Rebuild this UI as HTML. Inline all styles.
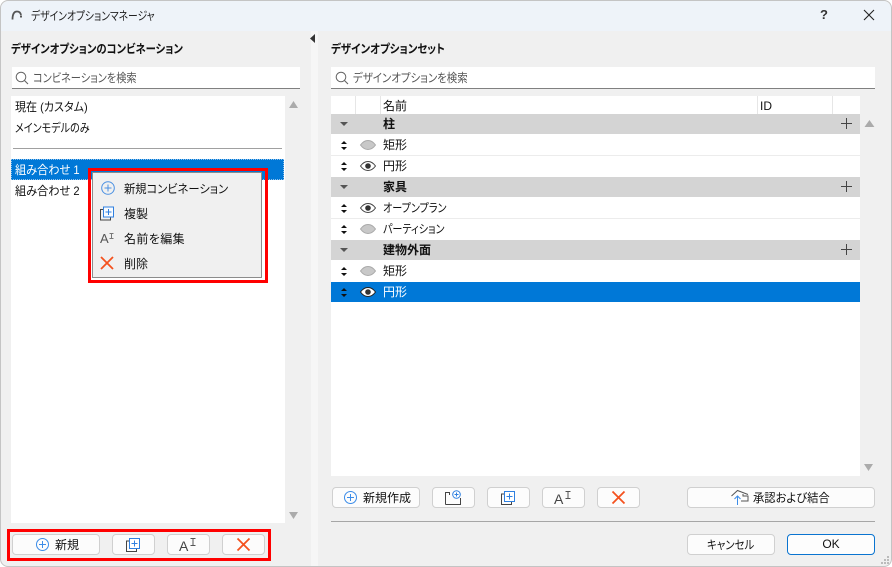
<!DOCTYPE html>
<html lang="ja"><head><meta charset="utf-8"><style>
*{box-sizing:border-box}
html,body{margin:0;padding:0;width:892px;height:567px;overflow:hidden;background:#fff}
body{font-family:"Liberation Sans","Noto Sans CJK JP",sans-serif;font-size:12px;color:#111;position:relative;font-feature-settings:"palt"}
#win{position:absolute;left:0;top:0;width:892px;height:567px;background:#f0f0f0;border:1px solid #c4c4c4;border-radius:8px;overflow:hidden}
.a{position:absolute}
.t{position:absolute;white-space:nowrap;line-height:16px;font-size:12px;transform-origin:0 50%}
.b{font-weight:bold}
.btn{position:absolute;height:21px;background:#fcfcfc;border:1px solid #d0d0d0;border-radius:4px;text-align:center;line-height:19px;font-size:12px}
.row{position:absolute;left:331px;width:529px;height:20px;background:#fff}
.grp{background:#d4d4d4}
svg{position:absolute;overflow:visible}
.red{position:absolute;border:3px solid #f00}
</style></head><body>
<div id="win"></div>

<!-- title bar -->
<div class="a" style="left:1px;top:1px;width:890px;height:30px;background:#eef3f9;border-radius:8px 8px 0 0"></div>
<svg style="left:10px;top:8px" width="14" height="14" viewBox="0 0 14 14"><path d="M2.500 11.500C2.500 6.500 4 3.500 7 3.500c2 0 3.500 1 4 3.500" fill="none" stroke="#555" stroke-width="1.800"/><rect x="10" y="7.500" width="2" height="2" fill="#555"/></svg>
<div class="t" style="left:31px;top:8px;color:#222;transform:scaleX(.816)">デザインオプションマネージャ</div>
<div class="t" style="left:820px;top:7px;font-size:13px;font-weight:bold;color:#333">?</div>
<svg style="left:863px;top:9px" width="12" height="12" viewBox="0 0 12 12"><path d="M1 1L11 11M11 1L1 11" stroke="#222" stroke-width="1.100" fill="none"/></svg>

<!-- splitter -->
<div class="a" style="left:311px;top:31px;width:7px;height:535px;background:#f6f6f6"></div>
<svg style="left:310px;top:34px" width="6" height="9"><path d="M5 0V9L0 4.500Z" fill="#333"/></svg>

<!-- left panel -->
<div class="t b" style="left:11px;top:41px;transform:scaleX(.86)">デザインオプションのコンビネーション</div>
<div class="a" style="left:12px;top:67px;width:288px;height:22px;background:#fff;border-bottom:1px solid #808080"></div>
<svg style="left:15px;top:71px" width="14" height="14" viewBox="0 0 14 14"><circle cx="6" cy="6" r="4.800" fill="none" stroke="#666" stroke-width="1"/><path d="M9.500 9.500L13 13" stroke="#666" stroke-width="1.100"/></svg>
<div class="t" style="left:33px;top:70px;color:#555;transform:scaleX(.85)">コンビネーションを検索</div>

<div class="a" style="left:11px;top:96px;width:274px;height:427px;background:#fff"></div>
<div class="t" style="left:15px;top:99px;transform:scaleX(.92)">現在 (カスタム)</div>
<div class="t" style="left:15px;top:120px;transform:scaleX(.84)">メインモデルのみ</div>
<div class="a" style="left:13px;top:148px;width:269px;height:1px;background:#a0a0a0"></div>
<div class="a" style="left:11px;top:159px;width:273px;height:21px;background:#0078d7;border:1px dotted #8fc0ea"></div>
<div class="t" style="left:15px;top:162px;color:#fff;transform:scaleX(.93)">組み合わせ 1</div>
<div class="t" style="left:15px;top:183px;transform:scaleX(.93)">組み合わせ 2</div>
<svg style="left:289px;top:101px" width="9" height="7"><path d="M4.500 0L9 7H0Z" fill="#ababab"/></svg>
<svg style="left:289px;top:512px" width="9" height="7"><path d="M0 0H9L4.500 7Z" fill="#ababab"/></svg>

<!-- context menu -->
<div class="a" style="left:92px;top:172px;width:170px;height:106px;background:#f0f0f0;border:1px solid #8c8c8c"></div>
<div class="red" style="left:88px;top:168px;width:180px;height:115px"></div>
<svg style="left:101px;top:181px" width="14" height="14" viewBox="0 0 14 14"><circle cx="7" cy="7" r="6.300" fill="none" stroke="#4a90e2"/><path d="M3.500 7H10.500M7 3.500V10.500" stroke="#4a90e2"/></svg>
<div class="t" style="left:124px;top:181px;transform:scaleX(.94)">新規コンビネーション</div>
<svg style="left:100px;top:206px" width="14" height="15" viewBox="0 0 14 15"><path d="M4 3.500H.5V14H10.500V11" fill="none" stroke="#444"/><rect x="3.500" y="1" width="10" height="10" fill="#f8fbff" stroke="#2f80e0"/><path d="M5.500 6H11.500M8.500 3V9" stroke="#2f80e0"/></svg>
<div class="t" style="left:124px;top:206px">複製</div>
<div class="t" style="left:100px;top:231px;font-size:13px;color:#555">A</div>
<svg style="left:109px;top:233px" width="5" height="6"><path d="M.5 .5H4.500M.5 5.500H4.500M2.500 .5V5.500" stroke="#777" fill="none"/></svg>
<div class="t" style="left:124px;top:231px;letter-spacing:.4px">名前を編集</div>
<svg style="left:100px;top:256px" width="14" height="14" viewBox="0 0 14 14"><path d="M1 1L13 13M13 1L1 13" stroke="#f4511e" stroke-width="1.800"/></svg>
<div class="t" style="left:124px;top:256px">削除</div>

<!-- left buttons -->
<div class="red" style="left:7px;top:529px;width:264px;height:32px"></div>
<div class="btn" style="left:12px;top:534px;width:88px"></div>
<svg style="left:36px;top:538px" width="13" height="13" viewBox="0 0 13 13"><circle cx="6.500" cy="6.500" r="6" fill="none" stroke="#3b8ce8"/><path d="M3 6.500H10M6.500 3V10" stroke="#3b8ce8"/></svg>
<div class="t" style="left:55px;top:537px">新規</div>
<div class="btn" style="left:112px;top:534px;width:43px"></div>
<svg style="left:126px;top:538px" width="14" height="14" viewBox="0 0 14 14"><path d="M3.500 3H.5V13.500H10.500V10.500" fill="none" stroke="#444"/><rect x="3.500" y=".5" width="10" height="10" fill="#fff" stroke="#2f80e0"/><path d="M5.500 5.500H11.500M8.500 2.500V8.500" stroke="#2f80e0"/></svg>
<div class="btn" style="left:167px;top:534px;width:43px"></div>
<div class="t" style="left:179px;top:538px;font-size:14px;color:#444">A</div>
<svg style="left:190px;top:538px" width="6" height="8"><path d="M.5 .5H5.500M.5 7.500H5.500M3 .5V7.500" stroke="#555" fill="none"/></svg>
<div class="btn" style="left:222px;top:534px;width:43px"></div>
<svg style="left:237px;top:538px" width="13" height="13" viewBox="0 0 13 13"><path d="M.5 .5L12.500 12.500M12.500 .5L.5 12.500" stroke="#f4511e" stroke-width="1.800"/></svg>

<!-- right panel -->
<div class="t b" style="left:331px;top:41px;transform:scaleX(.87)">デザインオプションセット</div>
<div class="a" style="left:331px;top:67px;width:544px;height:22px;background:#fff;border-bottom:1px solid #808080"></div>
<svg style="left:335px;top:71px" width="14" height="14" viewBox="0 0 14 14"><circle cx="6" cy="6" r="4.800" fill="none" stroke="#666" stroke-width="1"/><path d="M9.500 9.500L13 13" stroke="#666" stroke-width="1.100"/></svg>
<div class="t" style="left:353px;top:70px;color:#555;transform:scaleX(.87)">デザインオプションを検索</div>

<div class="a" style="left:331px;top:96px;width:529px;height:380px;background:#fff"></div>
<!-- header separators -->
<div class="a" style="left:355px;top:96px;width:1px;height:18px;background:#e6e6e6"></div>
<div class="a" style="left:380px;top:96px;width:1px;height:18px;background:#e6e6e6"></div>
<div class="a" style="left:757px;top:96px;width:1px;height:18px;background:#e6e6e6"></div>
<div class="a" style="left:832px;top:96px;width:1px;height:18px;background:#e6e6e6"></div>
<div class="t" style="left:383px;top:98px">名前</div>
<div class="t" style="left:760px;top:98px">ID</div>
<svg style="left:864px;top:120px" width="11" height="7"><path d="M5.500 0L11 7H0Z" fill="#ababab" transform="translate(.5 0) scale(.9 1)"/></svg>
<svg style="left:864px;top:464px" width="10" height="7"><path d="M0 0H9L4.500 7Z" fill="#ababab"/></svg>

<!-- rows -->
<div class="row grp" style="top:114px"></div>
<div class="a" style="left:331px;top:155px;width:529px;height:1px;background:#ececec"></div>
<div class="row grp" style="top:177px"></div>
<div class="a" style="left:331px;top:218px;width:529px;height:1px;background:#ececec"></div>
<div class="row grp" style="top:240px"></div>
<div class="row" style="top:282px;height:20px;background:#0078d7"></div>

<div class="t b" style="left:383px;top:116px">柱</div>
<div class="t b" style="left:383px;top:179px">家具</div>
<div class="t b" style="left:383px;top:242px">建物外面</div>
<div class="t" style="left:383px;top:137px">矩形</div>
<div class="t" style="left:383px;top:158px">円形</div>
<div class="t" style="left:383px;top:200px;transform:scaleX(.84)">オープンプラン</div>
<div class="t" style="left:383px;top:221px;transform:scaleX(.84)">パーティション</div>
<div class="t" style="left:383px;top:263px">矩形</div>
<div class="t" style="left:383px;top:284px;color:#fff">円形</div>

<!-- group arrows and plus -->
<svg style="left:340px;top:122px" width="8" height="4"><path d="M0 0H8L4 4Z" fill="#555"/></svg>
<svg style="left:340px;top:185px" width="8" height="4"><path d="M0 0H8L4 4Z" fill="#555"/></svg>
<svg style="left:340px;top:248px" width="8" height="4"><path d="M0 0H8L4 4Z" fill="#555"/></svg>
<svg style="left:841px;top:118px" width="11" height="11"><path d="M0 5.500H11M5.500 0V11" stroke="#444"/></svg>
<svg style="left:841px;top:181px" width="11" height="11"><path d="M0 5.500H11M5.500 0V11" stroke="#444"/></svg>
<svg style="left:841px;top:244px" width="11" height="11"><path d="M0 5.500H11M5.500 0V11" stroke="#444"/></svg>

<!-- drag handles -->
<svg style="left:341px;top:141px" width="6" height="9"><path d="M3 0L6 3H0ZM3 9L0 6H6Z" fill="#111"/></svg>
<svg style="left:341px;top:162px" width="6" height="9"><path d="M3 0L6 3H0ZM3 9L0 6H6Z" fill="#111"/></svg>
<svg style="left:341px;top:204px" width="6" height="9"><path d="M3 0L6 3H0ZM3 9L0 6H6Z" fill="#111"/></svg>
<svg style="left:341px;top:225px" width="6" height="9"><path d="M3 0L6 3H0ZM3 9L0 6H6Z" fill="#111"/></svg>
<svg style="left:341px;top:267px" width="6" height="9"><path d="M3 0L6 3H0ZM3 9L0 6H6Z" fill="#111"/></svg>
<svg style="left:341px;top:288px" width="6" height="9"><path d="M3 0L6 3H0ZM3 9L0 6H6Z" fill="#111"/></svg>

<!-- eyes -->
<svg style="left:360px;top:140px" width="16" height="10" viewBox="0 0 16 10"><path d="M.5 5C3 1.500 5.500 .5 8 .5S13 1.500 15.500 5C13 8.500 10.500 9.500 8 9.500S3 8.500 .5 5Z" fill="#c8c8c8" stroke="#aaa"/></svg>
<svg style="left:360px;top:224px" width="16" height="10" viewBox="0 0 16 10"><path d="M.5 5C3 1.500 5.500 .5 8 .5S13 1.500 15.500 5C13 8.500 10.500 9.500 8 9.500S3 8.500 .5 5Z" fill="#c8c8c8" stroke="#aaa"/></svg>
<svg style="left:360px;top:266px" width="16" height="10" viewBox="0 0 16 10"><path d="M.5 5C3 1.500 5.500 .5 8 .5S13 1.500 15.500 5C13 8.500 10.500 9.500 8 9.500S3 8.500 .5 5Z" fill="#c8c8c8" stroke="#aaa"/></svg>
<svg style="left:360px;top:161px" width="16" height="10" viewBox="0 0 16 10"><path d="M.5 5C3 1.500 5.500 .5 8 .5S13 1.500 15.500 5C13 8.500 10.500 9.500 8 9.500S3 8.500 .5 5Z" fill="#fff" stroke="#444"/><circle cx="8" cy="5" r="2.800" fill="#333"/></svg>
<svg style="left:360px;top:203px" width="16" height="10" viewBox="0 0 16 10"><path d="M.5 5C3 1.500 5.500 .5 8 .5S13 1.500 15.500 5C13 8.500 10.500 9.500 8 9.500S3 8.500 .5 5Z" fill="#fff" stroke="#444"/><circle cx="8" cy="5" r="2.800" fill="#333"/></svg>
<svg style="left:360px;top:287px" width="16" height="10" viewBox="0 0 16 10"><path d="M.5 5C3 1.500 5.500 .5 8 .5S13 1.500 15.500 5C13 8.500 10.500 9.500 8 9.500S3 8.500 .5 5Z" fill="#fff" stroke="#222"/><circle cx="8" cy="5" r="2.800" fill="#333"/></svg>

<!-- right buttons -->
<div class="btn" style="left:332px;top:487px;width:88px"></div>
<svg style="left:344px;top:491px" width="13" height="13" viewBox="0 0 13 13"><circle cx="6.500" cy="6.500" r="6" fill="none" stroke="#3b8ce8"/><path d="M3 6.500H10M6.500 3V10" stroke="#3b8ce8"/></svg>
<div class="t" style="left:363px;top:490px">新規作成</div>
<div class="btn" style="left:432px;top:487px;width:43px"></div>
<svg style="left:445px;top:490px" width="17" height="15" viewBox="0 0 17 15"><path d="M.5 14.500V2.500H4.500V5M.5 14.500H15.500V8" fill="none" stroke="#444"/><circle cx="11.500" cy="4.500" r="3.800" fill="#fff" stroke="#2f80e0"/><path d="M9.500 4.500H13.500M11.500 2.500V6.500" stroke="#2f80e0"/></svg>
<div class="btn" style="left:487px;top:487px;width:43px"></div>
<svg style="left:501px;top:491px" width="14" height="14" viewBox="0 0 14 14"><path d="M3.500 3H.5V13.500H10.500V10.500" fill="none" stroke="#444"/><rect x="3.500" y=".5" width="10" height="10" fill="#fff" stroke="#2f80e0"/><path d="M5.500 5.500H11.500M8.500 2.500V8.500" stroke="#2f80e0"/></svg>
<div class="btn" style="left:542px;top:487px;width:43px"></div>
<div class="t" style="left:554px;top:491px;font-size:14px;color:#444">A</div>
<svg style="left:565px;top:491px" width="6" height="8"><path d="M.5 .5H5.500M.5 7.500H5.500M3 .5V7.500" stroke="#555" fill="none"/></svg>
<div class="btn" style="left:597px;top:487px;width:43px"></div>
<svg style="left:612px;top:491px" width="13" height="13" viewBox="0 0 13 13"><path d="M.5 .5L12.500 12.500M12.500 .5L.5 12.500" stroke="#f4511e" stroke-width="1.800"/></svg>
<div class="btn" style="left:687px;top:487px;width:188px"></div>
<svg style="left:731px;top:489px" width="18" height="17" viewBox="0 0 18 17"><path d="M.5 7L6.500 1.500L17 5.500M12 5V7H17V12H10" fill="none" stroke="#555"/><path d="M6.500 16V7M3.500 10L6.500 7L9.500 10" fill="none" stroke="#3b8ce8"/></svg>
<div class="t" style="left:753px;top:490px;transform:scaleX(.94)">承認および結合</div>

<div class="a" style="left:331px;top:521px;width:544px;height:1px;background:#a6a6a6"></div>
<div class="btn" style="left:687px;top:534px;width:88px"></div>
<div class="t" style="left:707px;top:537px;transform:scaleX(.87)">キャンセル</div>
<div class="btn" style="left:787px;top:534px;width:88px;border-color:#0a74d0;background:#fdfdfd">OK</div>
<svg style="left:880px;top:555px" width="10" height="10"><path d="M7 1h2v2H7zM4 4h2v2H4zM7 4h2v2H7zM1 7h2v2H1zM4 7h2v2H4zM7 7h2v2H7z" fill="#bbb"/></svg>
</body></html>
